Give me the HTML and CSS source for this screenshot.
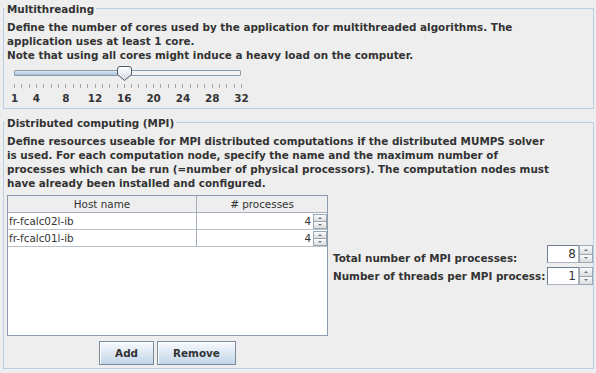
FILE: index.html
```html
<!DOCTYPE html>
<html lang="en">
<head>
    <meta charset="UTF-8">
    <title>Computation settings</title>
    <link rel="stylesheet" href="styles.css">
</head>
<body>
    <fieldset class="group">
        <legend>Multithreading</legend>
        <p class="info">Define the number of cores used by the application for multithreaded algorithms. The<br>application uses at least 1 core.<br>Note that using all cores might induce a heavy load on the computer.</p>

        <div class="slider">
            <div class="slider-bar">
                <div class="track"><div class="track-fill" style="width: 48.39%"></div></div>
                <svg class="thumb" style="left: 48.39%" viewBox="0 0 15 15" width="15" height="15">
                    <defs>
                        <linearGradient id="thumbFill" x1="0" y1="0" x2="0" y2="1">
                            <stop offset="0" stop-color="#ffffff"/>
                            <stop offset="1" stop-color="#d3dae2"/>
                        </linearGradient>
                    </defs>
                    <path d="M0.5 3 Q0.5 0.5 3 0.5 H12 Q14.5 0.5 14.5 3 V8.5 L7.5 14.5 L0.5 8.5 Z" fill="url(#thumbFill)" stroke="#4d5b69"/>
                </svg>
            </div>
            <div class="ticks"></div>
            <div class="tick-labels">
                <span style="left: 0%">1</span>
                <span style="left: 9.68%">4</span>
                <span style="left: 22.58%">8</span>
                <span style="left: 35.48%">12</span>
                <span style="left: 48.39%">16</span>
                <span style="left: 61.29%">20</span>
                <span style="left: 74.19%">24</span>
                <span style="left: 87.10%">28</span>
                <span style="left: 100%">32</span>
            </div>
        </div>
    </fieldset>

    <fieldset class="group group-mpi">
        <legend>Distributed computing (MPI)</legend>
        <p class="info">Define resources useable for MPI distributed computations if the distributed MUMPS solver<br>is used. For each computation node, specify the name and the maximum number of<br>processes which can be run (=number of physical processors). The computation nodes must<br>have already been installed and configured.</p>

        <div class="mpi-body">
            <div class="hosts">
                <div class="table-pane">
                    <table class="hosts-table">
                        <thead>
                            <tr>
                                <th class="host-col">Host name</th>
                                <th># processes</th>
                            </tr>
                        </thead>
                        <tbody>
                            <tr>
                                <td class="host-col">fr-fcalc02l-ib</td>
                                <td>
                                    <div class="num-cell">
                                        <span class="num">4</span>
                                        <span class="arrows"><span class="arrow up"></span><span class="arrow down"></span></span>
                                    </div>
                                </td>
                            </tr>
                            <tr>
                                <td class="host-col">fr-fcalc01l-ib</td>
                                <td>
                                    <div class="num-cell">
                                        <span class="num">4</span>
                                        <span class="arrows"><span class="arrow up"></span><span class="arrow down"></span></span>
                                    </div>
                                </td>
                            </tr>
                        </tbody>
                    </table>
                </div>
                <div class="buttons">
                    <button>Add</button>
                    <button>Remove</button>
                </div>
            </div>

            <div class="totals">
                <div class="total-labels">
                    <label>Total number of MPI processes:</label>
                    <label>Number of threads per MPI process:</label>
                </div>
                <div class="total-spinners">
                    <div class="spinner">
                        <span class="spin-field">8</span>
                        <span class="arrows"><span class="arrow up"></span><span class="arrow down"></span></span>
                    </div>
                    <div class="spinner">
                        <span class="spin-field">1</span>
                        <span class="arrows"><span class="arrow up"></span><span class="arrow down"></span></span>
                    </div>
                </div>
            </div>
        </div>
    </fieldset>
</body>
</html>
```

FILE: styles.css
```css
body {
    margin: 0;
    padding: 0;
    background-color: #eeeeee;
    font-family: "DejaVu Sans", sans-serif;
    font-size: 10.4px;
    line-height: 14px;
    color: #333333;
}

.group {
    margin: 0 2px 0 3px;
    padding: 4px 0 3px 3px;
    border: 1px solid #b8cfe5;
    min-width: 0;
}

.group legend {
    margin-left: -2px;
    padding: 2px 2px 0;
    font-weight: bold;
    line-height: 14px;
}

.group-mpi {
    margin-top: 5px;
}

.info {
    margin: 0;
    font-weight: bold;
    white-space: nowrap;
}

/* slider */

.slider {
    width: 227px;
    margin: 4px 0 0 7px;
}

.slider-bar {
    position: relative;
    height: 15px;
    padding-top: 4px;
    box-sizing: border-box;
}

.track {
    height: 6px;
    box-sizing: border-box;
    border: 1px solid #8a9bab;
    border-radius: 1px;
    background: #f3f3f3;
}

.track-fill {
    height: 100%;
    background: linear-gradient(#e2ebf5, #a6bfd8);
}

.thumb {
    position: absolute;
    top: 0;
    margin-left: -7px;
}

.ticks {
    width: 228px;
    height: 4px;
    margin-top: 3px;
    background: repeating-linear-gradient(to right, #a4a4a4 0, #a4a4a4 1px, transparent 1px, transparent 7.3226px);
}

.tick-labels {
    position: relative;
    height: 13px;
    margin-top: 4px;
    line-height: 13px;
    font-weight: bold;
}

.tick-labels span {
    position: absolute;
    top: 0;
    margin-left: 0.5px;
    transform: translateX(-50%);
}

/* hosts table */

.mpi-body {
    display: flex;
    align-items: flex-start;
    margin-top: 5px;
}

.hosts {
    width: 321px;
}

.table-pane {
    height: 141px;
    box-sizing: border-box;
    border: 1px solid #8c9aab;
    background: #ffffff;
    overflow: hidden;
}

.hosts-table {
    width: 100%;
    border-collapse: separate;
    border-spacing: 0;
    table-layout: fixed;
}

.hosts-table th {
    padding: 0;
    font-weight: normal;
    line-height: 16px;
    background: #eeeeee;
    border-bottom: 1px solid #a3afbb;
}

.hosts-table td {
    padding: 0;
    line-height: 16px;
    border-bottom: 1px solid #b9c1ca;
}

.hosts-table .host-col {
    width: 188px;
    border-right: 1px solid #a3afbb;
}

.hosts-table td.host-col {
    padding-left: 1px;
    width: 187px;
}

.num-cell {
    display: flex;
    justify-content: flex-end;
    align-items: center;
    height: 16px;
}

.num {
    margin-right: 2px;
}

.num-cell .arrows {
    width: 14px;
    height: 15px;
}

.arrows {
    display: flex;
    flex-direction: column;
}

.arrow {
    flex: 1;
    position: relative;
    box-sizing: border-box;
    border: 1px solid #9aa8b6;
    background: linear-gradient(#fbfbfb, #dcdcdc);
}

.arrow.down {
    border-top: none;
}

.arrow::after {
    content: "";
    position: absolute;
    left: 50%;
    top: 50%;
    margin: -1px 0 0 -2px;
    border-left: 2px solid transparent;
    border-right: 2px solid transparent;
}

.arrow.up::after {
    border-bottom: 2px solid #6b7785;
}

.arrow.down::after {
    border-top: 2px solid #6b7785;
}

.buttons {
    display: flex;
    justify-content: center;
    gap: 3px;
    margin-top: 5px;
}

button {
    height: 24px;
    padding: 0 15px;
    font-family: "DejaVu Sans", sans-serif;
    font-size: 10.4px;
    font-weight: bold;
    color: #333333;
    border: 1px solid #7a8a99;
    box-shadow: inset 1px 1px 0 #ffffff;
    background: linear-gradient(#f7fafd, #dde8f3 50%, #c2d5e8);
}

/* totals */

.totals {
    display: flex;
    margin-left: 5px;
}

.total-labels {
    display: flex;
    flex-direction: column;
    gap: 4px;
    width: 214px;
    margin-top: 56px;
    font-weight: bold;
    white-space: nowrap;
}

.total-spinners {
    display: flex;
    flex-direction: column;
    gap: 4px;
    width: 46px;
    margin-top: 50px;
}

.spinner {
    display: flex;
    height: 18px;
}

.spin-field {
    flex: 1;
    box-sizing: border-box;
    padding-right: 2px;
    border: 1px solid #a9b6c2;
    border-top-color: #6f7f8f;
    border-left-color: #6f7f8f;
    background: #ffffff;
    font-size: 12px;
    line-height: 16px;
    text-align: right;
}

.spinner .arrows {
    width: 14px;
}
```
